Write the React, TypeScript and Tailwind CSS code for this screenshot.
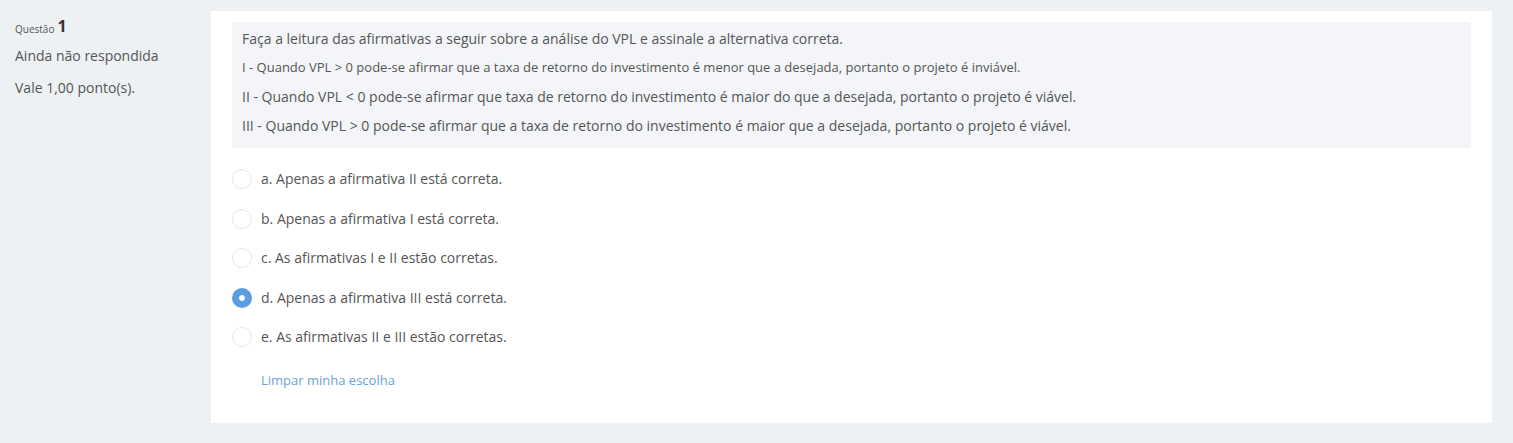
import React from "react";

const options = [
  "a. Apenas a afirmativa II está correta.",
  "b. Apenas a afirmativa I está correta.",
  "c. As afirmativas I e II estão corretas.",
  "d. Apenas a afirmativa III está correta.",
  "e. As afirmativas II e III estão corretas.",
];

export default function App() {
  return (
    <div
      className="w-[1513px] h-[443px] bg-[#eef1f3] flex text-[#555555]"
      style={{ fontFamily: '"Open Sans", "Liberation Sans", sans-serif' }}
    >
      <div className="w-[211px] shrink-0 pl-[15px] pt-[12px]">
        <div className="h-[24px] flex items-end">
          <span className="text-[10px] leading-[14px] mr-[3px]">Questão</span>
          <span className="text-[16px] font-bold leading-[20px] text-[#333]">1</span>
        </div>
        <div className="text-[14px] leading-[20px] mt-[10px]">Ainda não respondida</div>
        <div className="text-[14px] leading-[20px] mt-[12px]">Vale 1,00 ponto(s).</div>
      </div>
      <div className="mt-[11px] w-[1281px] h-[412px] bg-white px-[21px] pt-[11px]">
        <div className="bg-[#f3f5f8] rounded-[2px] px-[10px] pt-[2px] pb-[8px] text-[14px]">
          <p className="leading-[29px]">
            Faça a leitura das afirmativas a seguir sobre a análise do VPL e assinale a alternativa correta.
          </p>
          <p className="leading-[29px] text-[13px]">
            I - Quando VPL &gt; 0 pode-se afirmar que a taxa de retorno do investimento é menor que a desejada, portanto o projeto é inviável.
          </p>
          <p className="leading-[29px]">
            II - Quando VPL &lt; 0 pode-se afirmar que taxa de retorno do investimento é maior do que a desejada, portanto o projeto é viável.
          </p>
          <p className="leading-[29px]">
            III - Quando VPL &gt; 0 pode-se afirmar que a taxa de retorno do investimento é maior que a desejada, portanto o projeto é viável.
          </p>
        </div>
        <div className="mt-[11.5px] flex flex-col">
          {options.map((o, i) => (
            <div key={i} className="h-[39.5px] flex items-center">
              {i === 3 ? (
                <span className="w-[20px] h-[20px] rounded-full bg-[#5b9de1] flex items-center justify-center">
                  <span className="w-[6px] h-[6px] rounded-full bg-white border-[1px] border-white"></span>
                </span>
              ) : (
                <span className="w-[20px] h-[20px] rounded-full border border-[#e3e6e9] bg-white"></span>
              )}
              <span className="ml-[9px] text-[14px] leading-[20px]">{o}</span>
            </div>
          ))}
        </div>
        <div className="mt-[12.5px] ml-[29px] text-[13px] leading-[20px] text-[#6a9fd8]">Limpar minha escolha</div>
      </div>
    </div>
  );
}
